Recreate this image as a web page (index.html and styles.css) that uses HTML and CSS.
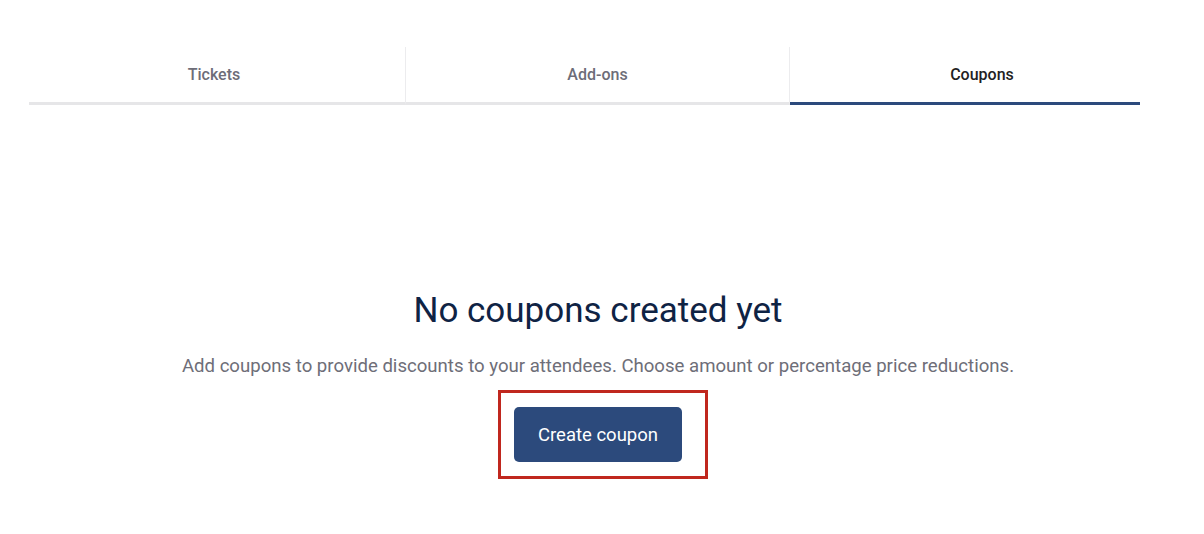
FILE: index.html
```html
<!DOCTYPE html>
<html lang="en">
<head>
    <meta charset="UTF-8">
    <meta name="viewport" content="width=device-width, initial-scale=1.0">
    <title>Coupons</title>
    <link rel="stylesheet" href="styles.css">
</head>
<body>

    <div class="tabs">
        <div class="tab">Tickets</div>
        <div class="tab">Add-ons</div>
        <div class="tab active">Coupons</div>
    </div>

    <div class="empty-state">
        <h1>No coupons created yet</h1>
        <p>Add coupons to provide discounts to your attendees. Choose amount or percentage price reductions.</p>
        <div class="highlight">
            <button class="create-btn">Create coupon</button>
        </div>
    </div>

</body>
</html>
```

FILE: styles.css
```css
body {
    margin: 0;
    font-family: Roboto, "Liberation Sans", sans-serif;
    background-color: #ffffff;
}

.tabs {
    display: flex;
    margin: 47px 0 0 29px;
    width: 1111px;
    border-bottom: 3px solid #e6e6e8;
}

.tab {
    height: 55px;
    display: flex;
    align-items: center;
    justify-content: center;
    font-size: 16px;
    font-weight: 500;
    color: #6d6d78;
    border-right: 1px solid #ececee;
    margin-bottom: -3px;
    border-bottom: 3px solid transparent;
}

.tab:nth-child(1) {
    width: 370px;
    padding-right: 6px;
}

.tab:nth-child(2) {
    width: 383px;
}

.tab.active {
    flex: 1;
    border-right: none;
    padding-left: 34px;
    color: #1f1f24;
    border-bottom-color: #2c4a7c;
}

.empty-state {
    display: flex;
    flex-direction: column;
    align-items: center;
    padding: 186px 8px 0 0;
}

h1 {
    margin: 0;
    font-size: 35px;
    line-height: 40px;
    font-weight: 400;
    color: #0f2344;
}

p {
    margin: 24px 0 0;
    font-size: 18.6px;
    line-height: 22px;
    color: #6e6e78;
}

.highlight {
    margin: 13px 0 0 10px;
    border: 3px solid #c0271e;
    padding: 14px 23px 14px 13px;
}

.create-btn {
    width: 168px;
    height: 55px;
    background-color: #2c4a7c;
    color: #ffffff;
    font-family: inherit;
    font-size: 18.5px;
    font-weight: 400;
    border: none;
    border-radius: 5px;
}
```
